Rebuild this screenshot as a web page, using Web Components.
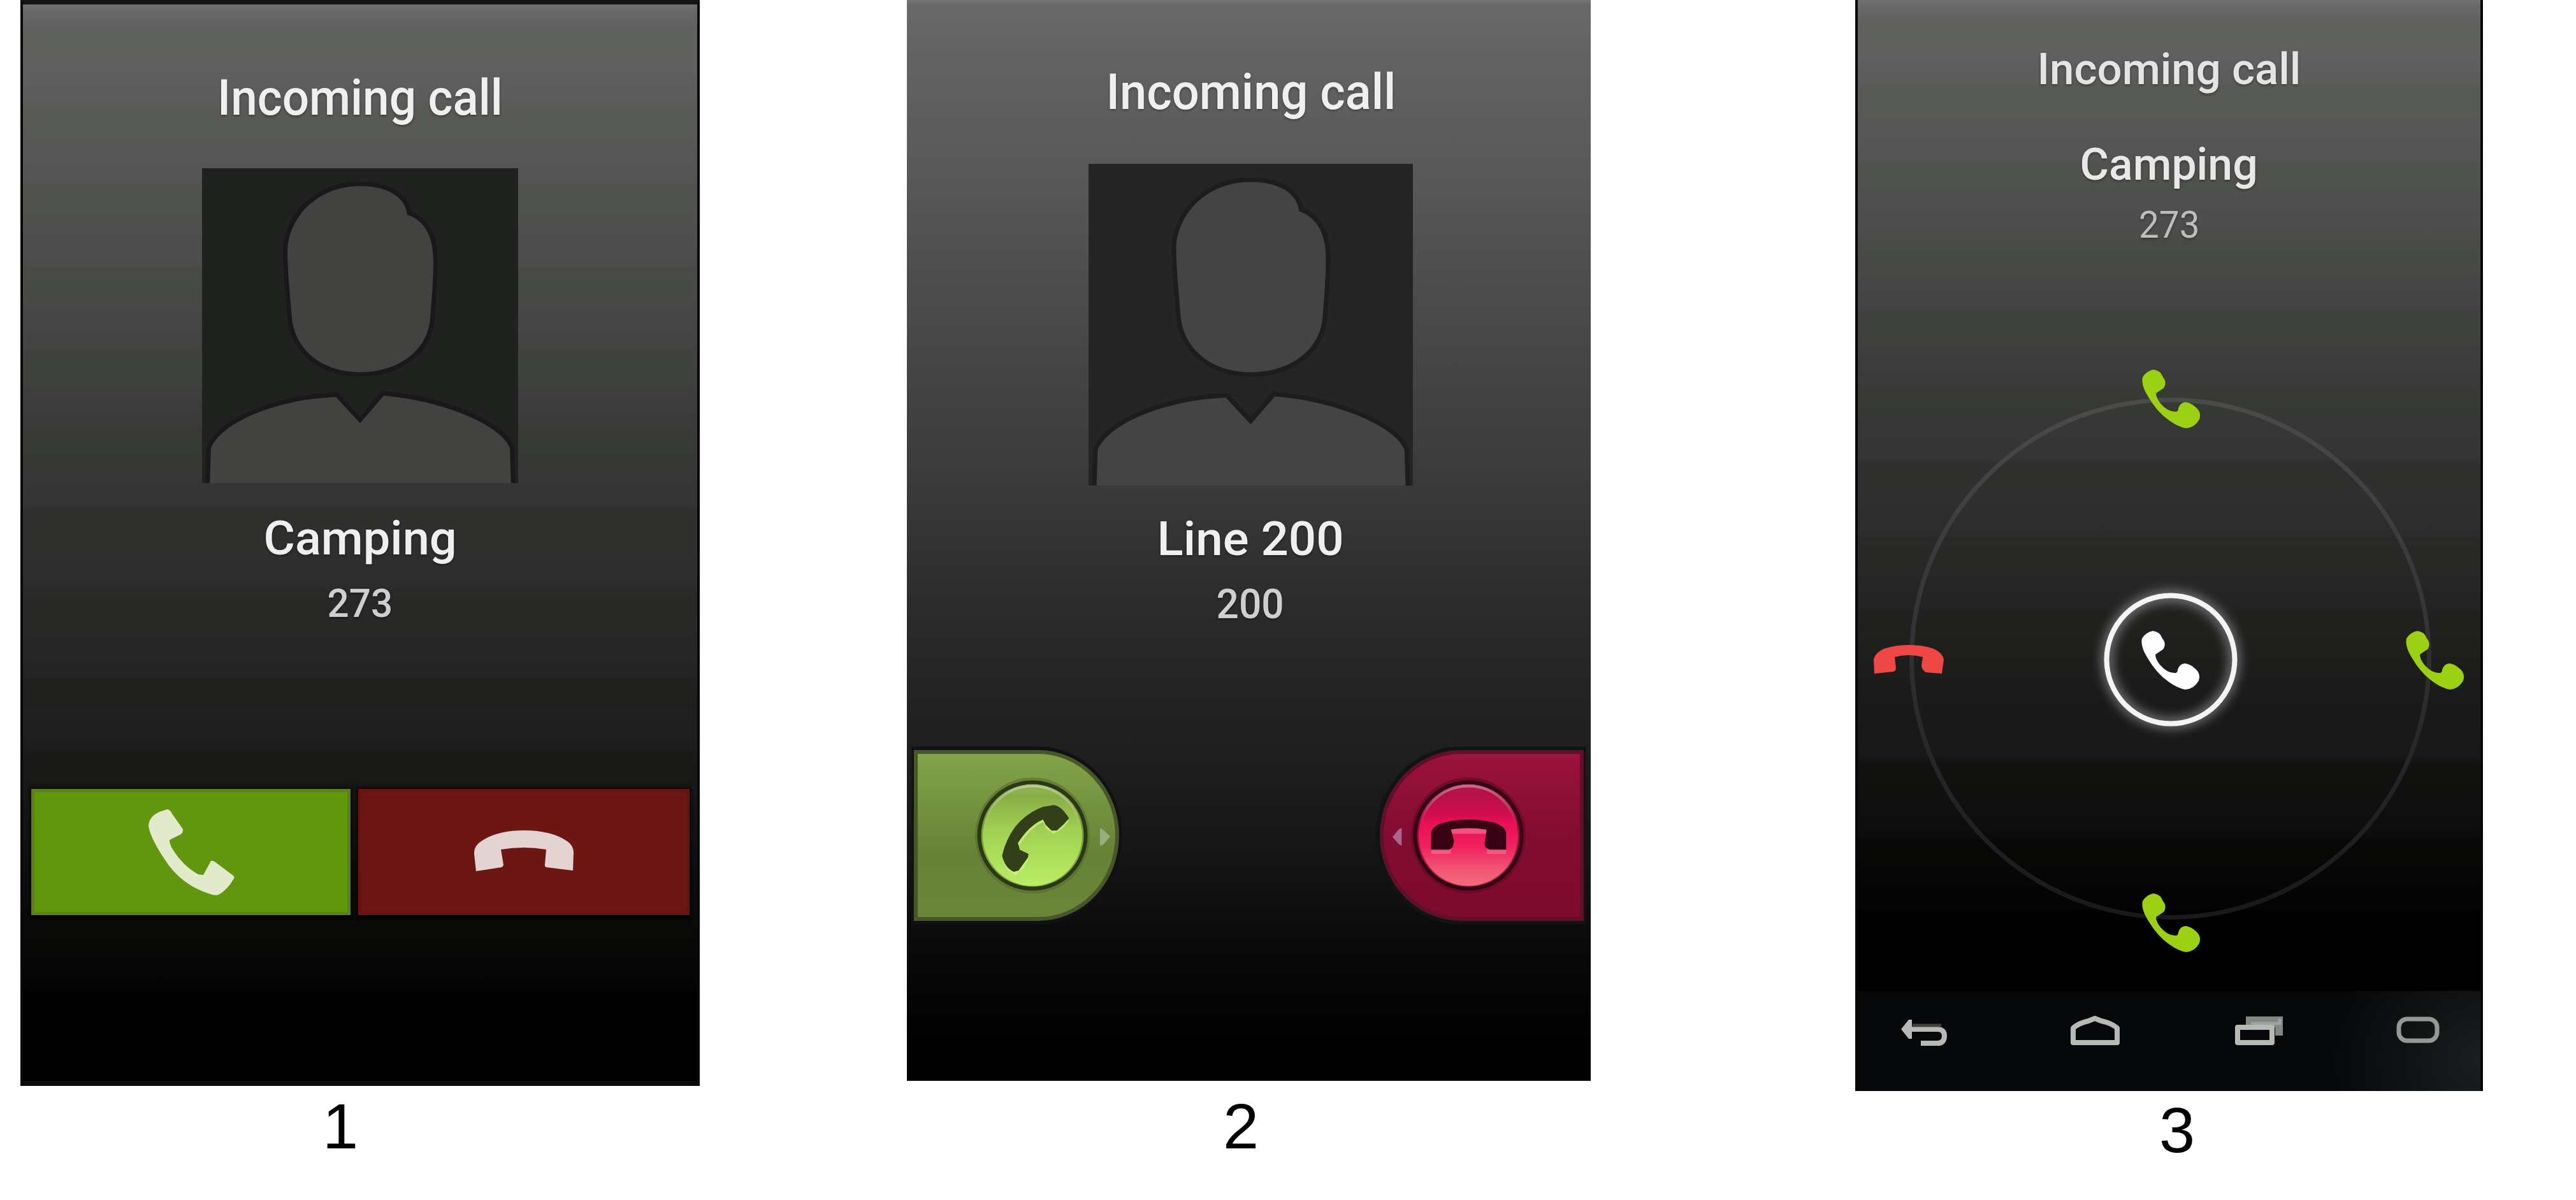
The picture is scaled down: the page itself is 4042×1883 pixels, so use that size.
<!DOCTYPE html>
<html lang="en">
<head>
<meta charset="utf-8">
<title>Incoming call screens</title>
<style>
html,body{margin:0;background:#fff;width:4042px;height:1883px;overflow:hidden;font-family:Roboto,"Liberation Sans",sans-serif}
</style>
</head>
<body>
<call-gallery>
  <call-figure style="margin-left:32px;--w:1066px;--cap-top:13px;--cap-x:474px">
    <phone-screen class="banded" style="--h:1704px;--bt:7px;--bb:8px;--bx:4px">
      <fit-text w="448" style="--s:77px;--mt:109px">Incoming call</fit-text>
      <contact-photo style="--pw:496px;--ph:494px;--mt:71px;--bg:#20221f;--fg:#424340;--edge:#191919"></contact-photo>
      <fit-text w="303" style="--s:75px;--mt:49px">Camping</fit-text>
      <fit-text w="103" class="num" style="--s:62px;--mt:34px">273</fit-text>
      <flat-actions></flat-actions>
    </phone-screen>
    <span slot="caption">1</span>
  </call-figure>
  <call-figure style="margin-left:325px;--w:1073px;--cap-top:21px;--cap-x:496px">
    <phone-screen class="smooth" style="--h:1696px;--bt:0px;--bb:0px;--bx:0px">
      <fit-text w="455" style="--s:78px;--mt:106px;--dx:7px">Incoming call</fit-text>
      <contact-photo style="--pw:509px;--ph:505px;--mt:73px;--dx:5px;--bg:#252525;--fg:#444;--edge:#1d1d1d"></contact-photo>
      <fit-text w="293" style="--s:75px;--mt:46px;--dx:5px">Line 200</fit-text>
      <fit-text w="106" class="num" style="--s:64px;--mt:34px;--dx:5px">200</fit-text>
      <slide-tabs></slide-tabs>
    </phone-screen>
    <span slot="caption">2</span>
  </call-figure>
  <call-figure style="margin-left:415px;--w:985px;--cap-top:11px;--cap-x:477px">
    <phone-screen class="tall" style="--h:1712px;--bt:0px;--bb:0px;--bx:4px">
      <fit-text w="414" style="--s:69px;--mt:74px;--c:#e4e4e4">Incoming call</fit-text>
      <fit-text w="279" style="--s:70px;--mt:80px;--c:#e8e8e8">Camping</fit-text>
      <fit-text w="95" class="num thin" style="--s:59px;--mt:30px">273</fit-text>
      <call-dial></call-dial>
      <nav-bar></nav-bar>
    </phone-screen>
    <span slot="caption">3</span>
  </call-figure>
</call-gallery>

<script>
function define(name, html, ready) {
  const t = document.createElement('template');
  t.innerHTML = html;
  customElements.define(name, class extends HTMLElement {
    connectedCallback() {
      if (this.shadowRoot) return;
      this.attachShadow({mode: 'open'}).appendChild(t.content.cloneNode(true));
      if (ready) ready(this);
    }
  });
}

define('call-gallery', `<style>:host{display:flex;align-items:flex-start}</style><slot></slot>`);

define('call-figure', `<style>
:host{display:flex;flex-direction:column;width:var(--w);flex:none}
.cap{margin-top:var(--cap-top);padding-left:var(--cap-x);font:101px/101px "Liberation Sans",Arial,sans-serif;color:#000}
</style><slot></slot><div class="cap"><slot name="caption"></slot></div>`);

define('phone-screen', `<style>
:host{display:flex;flex-direction:column;align-items:center;box-sizing:border-box;height:var(--h);overflow:hidden;
border:solid #060706;border-width:var(--bt) var(--bx) var(--bb)}
:host(.smooth){background:linear-gradient(#757575 0,#6f6f6f 5px,#696969 7px,#636363 80px,#5b5b5b 230px,#484848 520px,#3a3a3a 760px,#2d2d2d 930px,#232323 1100px,#151515 1350px,#0a0a0a 1480px,#030303 1600px,#000 1650px)}
:host(.banded){border-top-color:#141414;border-bottom-color:#0b0b0b;background:linear-gradient(#707070 0,#686868 12px,#636363 28px,#5f615d 40px,#60625d 86px,#606060 95px,#5c5c5c 150px,#585a56 160px,#575954 205px,#575757 225px,#545454 278px,#50524e 288px,#4f514c 340px,#4f4f4f 348px,#4c4c4c 410px,#484a46 416px,#474944 470px,#474747 480px,#434343 540px,#40423e 546px,#3f413c 600px,#3e3e3e 608px,#3a3a3a 665px,#383a36 671px,#363834 724px,#373737 735px,#343434 785px,#2f302e 793px,#30312e 835px,#2f2f2f 865px,#2c2c2c 912px,#292a28 920px,#282926 980px,#272727 995px,#242424 1050px,#20221f 1062px,#1f201d 1105px,#202020 1115px,#1d1d1d 1165px,#191a18 1174px,#181916 1220px,#151515 1270px,#10110f 1340px,#0a0b09 1440px,#080906 1485px,#070707 1495px,#040404 1545px,#000 1552px)}
:host(.tall){background:linear-gradient(#707070 0,#686868 12px,#636363 26px,#5f615d 40px,#60625d 75px,#606060 86px,#5c5c5c 128px,#585a56 136px,#575954 180px,#575757 198px,#545454 250px,#50524e 258px,#4f514c 304px,#4f4f4f 315px,#4c4c4c 373px,#484a46 379px,#474944 422px,#474747 432px,#434343 485px,#40423e 493px,#3f413c 538px,#3e3e3e 550px,#3a3a3a 604px,#383a36 612px,#363834 655px,#373737 665px,#343434 720px,#2f302e 728px,#30312e 770px,#2f2f2f 785px,#2c2c2c 838px,#292a28 846px,#282926 885px,#272727 900px,#232323 954px,#20221f 960px,#1f201d 1010px,#1a1a1a 1090px,#181818 1188px,#111310 1196px,#10110f 1240px,#101010 1255px,#0d0d0d 1308px,#080907 1318px,#070806 1360px,#060606 1375px,#040404 1425px,#000 1430px)}
</style><slot></slot>`);

define('fit-text', `<style>
:host{display:block;flex:none;font-size:var(--s);line-height:1;font-weight:500;color:var(--c,#efefef);margin-top:var(--mt);padding-left:var(--dx,0);white-space:pre;text-shadow:0 2px 4px rgba(0,0,0,.35)}
:host(.num){color:#cfcfcf}
:host(.thin){color:#bdbdbd;font-weight:400}
span{display:inline-block;transform-origin:50% 50%}
</style><span><slot></slot></span>`, el => {
  const s = el.shadowRoot.querySelector('span');
  requestAnimationFrame(() => {
    s.style.transform = 'scaleX(' + (el.getAttribute('w') / s.offsetWidth) + ')';
  });
});

define('contact-photo', `<style>
:host{display:block;flex:none;margin-top:var(--mt);padding-left:var(--dx,0)}
svg{display:block;width:var(--pw);height:var(--ph);background:var(--bg)}
path{fill:var(--fg);stroke:var(--edge);stroke-width:14;paint-order:stroke}
</style><svg viewBox="317 264 496 494" preserveAspectRatio="none">
<path d="M565 292C606 292 636 308 639 337C664 345 680 368 680 410C680 440 677 470 675 500C671 548 628 584 565 584C502 584 463 546 458 500C456 470 451 430 451 390C456 335 502 292 565 292Z"/>
<path d="M329 766L331 703C350 660 440 626 527 623L565 664L602 621C690 628 785 665 800 703L802 766Z"/></svg>`);

define('flat-actions', `<style>
:host{display:flex;gap:12px;margin-top:260px;width:1033px;height:198px}
div{display:block;box-sizing:border-box;box-shadow:0 6px 3px rgba(0,0,0,.75),0 0 5px 3px rgba(0,0,0,.5)}
.g{width:501px;background:#62960e;border:5px solid #5a8314}
.r{width:520px;background:#6d1714;border:5px solid #67130f}
svg{display:block;margin:-5px}
</style>
<div class="g"><svg width="501" height="198" viewBox="49 1238 501 198"><path fill="#e2eacb" d="M262 1270Q267 1270 270 1277L287 1301Q288 1305 284 1309L266 1318Q266 1324 270 1331Q286 1358 311 1372L319 1373L331 1351Q334 1350 338 1353L366 1374Q369 1377 366 1380Q357 1396 343 1404Q338 1406 330 1403Q284 1389 258 1348Q236 1315 233 1296Q234 1281 250 1274Z"/></svg></div>
<div class="r"><svg width="520" height="198" viewBox="562 1238 520 198"><path fill="#e3d3d3" d="M747 1367L744 1340Q743 1328 755 1320Q780 1303 822 1303Q865 1303 890 1320Q900 1327 900 1338L899 1366L858 1361Q854 1360 855 1356L857 1333Q822 1327 786 1333L790 1357Q789 1361 786 1361Z"/></svg></div>`);

define('slide-tabs', `<style>
:host{display:flex;justify-content:space-between;margin-top:196px;align-self:stretch;padding:0 11px}
svg{display:block;width:321px;height:268px;overflow:visible}
</style>
<svg viewBox="1434 1177 321 268"><defs>
<linearGradient id="a" x2="0" y2="1"><stop stop-color="#83a449"/><stop offset=".5" stop-color="#6b893a"/><stop offset=".6" stop-color="#668236"/><stop offset="1" stop-color="#6a8638"/></linearGradient>
<linearGradient id="b" x2="0" y2="1"><stop stop-color="#93b65b"/><stop offset=".14" stop-color="#89ae48"/><stop offset=".46" stop-color="#a1d152"/><stop offset="1" stop-color="#bcf066"/></linearGradient>
<linearGradient id="l" x2="0" y2="1"><stop stop-color="#fff" stop-opacity=".35"/><stop offset=".4" stop-color="#fff" stop-opacity="0"/></linearGradient>
</defs>
<path d="M1434 1175H1629A128 136 0 0 1 1629 1447H1434Z" fill="none" stroke="#101114" stroke-width="7"/>
<path d="M1437 1180H1629A124 131 0 0 1 1629 1442H1437Z" fill="url(#a)" stroke="#48572a" stroke-width="6"/>
<ellipse cx="1620" cy="1311" rx="84" ry="85" fill="url(#b)" stroke="#4f662b" stroke-width="12" stroke-opacity=".5"/>
<circle cx="1620" cy="1311" r="78" fill="none" stroke="url(#l)" stroke-width="5"/>
<circle cx="1620" cy="1311" r="83.500" fill="none" stroke="#2b3815" stroke-width="6"/>
<g transform="translate(1420 1160) scale(.33333)">
<path fill="#d4f58d" opacity=".65" transform="translate(0 16)" d="M700 312L745 330L770 370L745 400L700 430L665 405L650 375Q590 400 535 488L545 520L583 545L560 590L520 625L480 595L458 550Q475 480 520 410Q575 345 650 318Z"/>
<path fill="#333f18" d="M700 310Q735 312 772 372L748 400L715 430L690 430L662 403L650 378Q585 405 532 488L540 520L582 540L578 558L535 618L512 624Q470 605 457 548Q475 470 520 410Q575 345 650 318Z"/>
<path fill="#98ad7d" d="M918 418L935 428L966 458L935 494L918 502Z"/></g></svg>
<svg viewBox="2164 1177 321 268"><defs>
<linearGradient id="c" x2="0" y2="1"><stop stop-color="#a01540"/><stop offset=".08" stop-color="#97113b"/><stop offset=".5" stop-color="#820d32"/><stop offset="1" stop-color="#7d0b2e"/></linearGradient>
<linearGradient id="d" x2="0" y2="1"><stop stop-color="#b51c50"/><stop offset=".12" stop-color="#b51048"/><stop offset=".32" stop-color="#d40d50"/><stop offset=".38" stop-color="#e90f57"/><stop offset=".6" stop-color="#f0205f"/><stop offset=".8" stop-color="#f15473"/><stop offset="1" stop-color="#f56f7d"/></linearGradient>
<linearGradient id="l" x2="0" y2="1"><stop stop-color="#fff" stop-opacity=".35"/><stop offset=".4" stop-color="#fff" stop-opacity="0"/></linearGradient>
</defs>
<path d="M2485 1175H2292A130 136 0 0 0 2292 1447H2485Z" fill="none" stroke="#0f1513" stroke-width="7"/>
<path d="M2482 1180H2292A124 131 0 0 0 2292 1442H2482Z" fill="url(#c)" stroke="#60102c" stroke-width="6"/>
<ellipse cx="2304" cy="1311" rx="84" ry="85" fill="url(#d)" stroke="#620722" stroke-width="12" stroke-opacity=".6"/>
<circle cx="2304" cy="1311" r="78" fill="none" stroke="url(#l)" stroke-width="5"/>
<circle cx="2304" cy="1311" r="83.500" fill="none" stroke="#340314" stroke-width="6"/>
<g transform="translate(2140 1160) scale(.33333)">
<path fill="#f2678f" opacity=".75" transform="translate(0 20)" d="M317 520V440Q335 385 490 378Q650 385 670 440V520H580V425H410V520Z"/>
<path fill="#390315" d="M317 520V440Q322 410 370 394Q430 378 490 378Q560 378 620 394Q665 412 670 440V520H595Q570 515 568 495L578 425Q490 412 410 425L424 475Q424 515 400 520Z"/>
<path fill="#b0648a" d="M178 418L165 424L135 460L165 494L178 502Z"/></g></svg>`);

define('call-dial', `<style>
:host{display:block;flex:none;width:985px;height:1173px}
svg{display:block}
</style><svg width="985" height="1173" viewBox="2911 382 985 1173"><defs>
<filter id="glow" x="-30%" y="-30%" width="160%" height="160%"><feGaussianBlur stdDeviation="9"/></filter>
<linearGradient id="ring" x2="0" y2="1"><stop stop-color="#4b4b4c"/><stop offset=".5" stop-color="#303030"/><stop offset="1" stop-color="#191919"/></linearGradient>
<path id="h" d="M18 0Q29 1 33 12Q40 20 34 29L22 37Q22 44 29 53Q41 67 54 66Q57 65 57 61Q60 51 69 51Q78 53 83 58Q94 66 90 78Q83 91 69 92Q57 90 43 80Q24 67 10 43Q-2 24 1 12Q7 2 18 0Z"/></defs>
<circle cx="3405.500" cy="1033.500" r="406" fill="none" stroke="url(#ring)" stroke-width="7"/>
<circle cx="3406" cy="1035" r="100" fill="none" stroke="#aaa" stroke-width="14" opacity=".75" filter="url(#glow)"/>
<circle cx="3406" cy="1035" r="100.500" fill="none" stroke="#f4f4f4" stroke-width="8"/>
<use href="#h" x="3360" y="990" fill="#fdfdfd"/>
<g fill="#9bd013">
<use href="#h" x="3361" y="580"/><use href="#h" x="3775" y="990"/><use href="#h" x="3361" y="1402"/></g>
<path fill="#ef4745" d="M2941 1057L2940 1034Q2943 1024 2956 1018Q2974 1012 2995 1012Q3018 1012 3034 1018Q3048 1024 3050 1035L3047 1057L3022 1055Q3015 1051 3015 1044L3017 1031Q2995 1025 2973 1031L2975 1049Q2974 1054 2970 1054Z"/>
</svg>`);

define('nav-bar', `<style>
:host{display:block;flex:none;width:985px;height:157px;background:radial-gradient(ellipse 240px 210px at 100% 70%,#1b1d20,transparent),#070809}
svg{display:block}
</style><svg width="985" height="157" viewBox="2911 1555 985 157" fill="none" stroke="#b7b9b4" stroke-width="8" stroke-linejoin="round">
<path stroke="none" fill="#b7b9b4" d="M2983 1615L2995 1600H3000V1630H2995Z"/>
<path d="M2993 1615H3041Q3051 1616 3051 1625Q3051 1637 3040 1637H3014"/>
<path stroke="#414141" stroke-width="5" d="M3001 1609H3046"/>
<path d="M3253 1636V1613Q3263 1605 3277 1602L3287 1598L3297 1602Q3312 1605 3322 1613V1636Z"/>
<path stroke="none" fill="#858785" d="M3524 1595H3582V1625H3570V1612H3524Z"/>
<path stroke="#a0a29f" stroke-width="5" d="M3532 1606H3577V1599"/>
<path fill="#08080c" d="M3511 1612H3565V1636H3511Z"/>
<rect x="3764" y="1599" width="60" height="34" rx="13" stroke="#959996" stroke-width="7"/>
</svg>`);
</script>
</body>
</html>
